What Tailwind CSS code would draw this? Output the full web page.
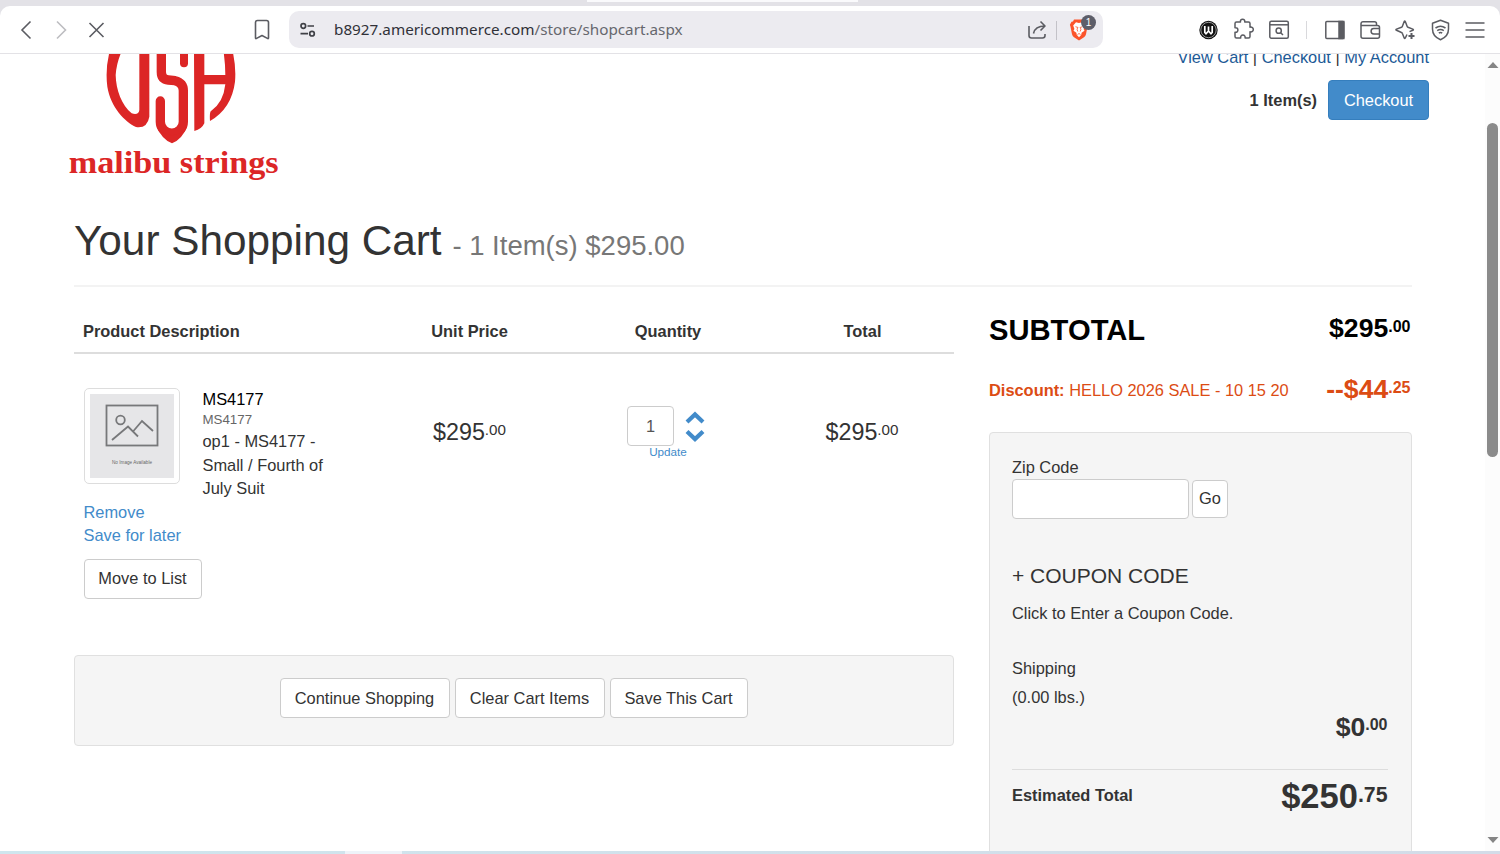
<!DOCTYPE html>
<html lang="en">
<head>
    <meta charset="UTF-8">
    <meta name="viewport" content="width=device-width, initial-scale=1.0">
    <title>Your Shopping Cart</title>
    <script src="https://cdn.jsdelivr.net/npm/@tailwindcss/browser@4"></script>
</head>
<body class="w-[1500px] h-[854px] overflow-hidden flex flex-col bg-white font-['Liberation_Sans',Arial,sans-serif] text-[16.4px] leading-[23.5px] text-[#333]">

    <!-- Tab strip -->
    <div class="h-[6px] shrink-0 bg-[#e3e2e7] pl-[587px]">
        <div class="w-[271px] h-[2px] bg-[#fafafc]"></div>
    </div>

    <!-- Browser toolbar -->
    <div class="h-12 shrink-0 bg-[#e3e2e7]">
        <div class="h-12 bg-white rounded-t-[10px] border-b border-[#e3e2e6] flex items-center pl-[14px] pt-px text-[#5b5c62]">
            <svg class="w-6 h-6 shrink-0" viewBox="0 0 24 24" fill="none" stroke="currentColor" stroke-width="1.6"><path d="M16.5 3.5L8 12l8.5 8.5"/></svg>
            <svg class="w-6 h-6 shrink-0 ml-[11px] text-[#bdbdc1]" viewBox="0 0 24 24" fill="none" stroke="currentColor" stroke-width="1.6"><path d="M8 3.5l8.5 8.5-8.5 8.5"/></svg>
            <svg class="w-6 h-6 shrink-0 ml-[11px]" viewBox="0 0 24 24" fill="none" stroke="currentColor" stroke-width="1.6"><path d="M5.5 5l14 14M19.5 5l-14 14"/></svg>
            <svg class="w-6 h-6 shrink-0 ml-[142px]" viewBox="0 0 24 24" fill="none" stroke="currentColor" stroke-width="1.6" stroke-linejoin="round"><path d="M5.500 4.500a2 2 0 0 1 2-2h9a2 2 0 0 1 2 2v15.300q0 1.300-1.100.6L12 17.500l-5.400 2.900q-1.100.7-1.100-.6z"/></svg>

            <div class="ml-[15px] mb-px w-[814px] h-[37px] shrink-0 rounded-[10px] bg-[#ecebf0] flex items-center pl-[7px] pt-px">
                <svg class="w-6 h-6 shrink-0" viewBox="0 0 24 24" fill="none" stroke="#3f4046" stroke-width="1.7"><circle cx="7.300" cy="8" r="2.300"/><path d="M11.500 8H18M4.500 15.700h7.500"/><circle cx="16" cy="15.700" r="2.300"/></svg>
                <span class="ml-[14px] w-[680px] font-['Noto_Sans','Open_Sans',sans-serif] text-[15.25px] text-[#66676d] whitespace-nowrap"><span class="text-[#303138]">b8927.americommerce.com</span>/store/shopcart.aspx</span>
                <svg class="w-6 h-6 shrink-0 ml-[11px]" viewBox="0 0 24 24" fill="none" stroke="currentColor" stroke-width="1.6" stroke-linejoin="round"><path d="M4 8v9.500a2.500 2.500 0 0 0 2.500 2.500h11a2.500 2.500 0 0 0 2.500-2.500V16M8.500 15.500C9.500 10.500 13 8 20 8M15.500 3.500L20 8l-4.500 4.500"/></svg>
                <div class="ml-[7px] w-px h-[19px] bg-[#c3c2c8]"></div>
                <div class="relative ml-[10px] w-6 h-6">
                    <svg class="w-6 h-6" viewBox="0 0 24 24"><path d="M7 1.500h9l2 2 1.700.2 1.300 3-.6 2-1.400 7.500q-.5 2-2 3L12 22.500l-5-3.300q-1.500-1-2-3L3.500 8.700l-.6-2 1.600-3 1.500-.2z" fill="#fb542b"/><path d="M12 5l3-.8 2.800 3.300-1.200 3.500.9 1.800-2.900 2-.3 2L12 19.200l-2.300-2.400-.3-2-2.900-2 .9-1.800-1.200-3.500L9 4.200z" fill="#fff"/><path d="M8.500 8.700l2.500.8-1 1.600.8 2.400M15.500 8.700l-2.500.8 1 1.600-.8 2.400M10.500 16.500l1.500-1 1.500 1" stroke="#fb542b" fill="none" stroke-width=".8"/></svg>
                    <span class="absolute left-[14px] -top-[3px] w-[15px] h-[15px] rounded-full bg-[#5d5e69] text-white text-[10px] leading-[15px] text-center">1</span>
                </div>
            </div>

            <svg class="w-6 h-6 shrink-0 ml-[93px]" viewBox="0 0 24 24"><circle cx="12.500" cy="12" r="9.200" fill="#111"/><circle cx="12.500" cy="12" r="7.700" fill="none" stroke="#b9b9b9" stroke-width=".8"/><path d="M8.800 8v6.500l1.200 1.300 2.500-2.800 2.500 2.800 1.200-1.300V8M12.500 8.500V13" fill="none" stroke="#fff" stroke-width="1.7"/></svg>
            <svg class="w-6 h-6 shrink-0 ml-[11px]" viewBox="0 0 24 24" fill="none" stroke="currentColor" stroke-width="1.5" stroke-linejoin="round"><path d="M5.500 4h4c-.4-1.800.5-2.800 2.100-2.800s2.500 1 2.100 2.800h3.800q1.500 0 1.500 1.500v3.700c2-.5 3.300.7 3.300 2.300s-1.300 2.800-3.300 2.300v4.700q0 1.500-1.500 1.500h-3.400c.3-1.800-.6-2.900-2.200-2.900S9.400 18.200 9.700 20H5.500Q4 20 4 18.500v-4.200c1.800.3 2.900-.8 2.900-2.300S5.800 9.400 4 9.700V5.500Q4 4 5.500 4z"/></svg>
            <svg class="w-6 h-6 shrink-0 ml-[12px]" viewBox="0 0 24 24" fill="none" stroke="currentColor" stroke-width="1.5"><rect x="2.800" y="3.200" width="18.500" height="17" rx="1.500"/><path d="M3 6.800h18.500"/><circle cx="11.700" cy="12.700" r="2.600"/><path d="M13.700 14.700l2.300 2.300"/></svg>
            <div class="ml-[15px] w-px h-[18px] bg-[#d9d9dc]"></div>
            <svg class="w-6 h-6 shrink-0 ml-[16px]" viewBox="0 0 24 24" fill="none" stroke="currentColor" stroke-width="1.5"><rect x="2.800" y="3.500" width="18" height="17" rx="1"/><path d="M16 3.500h4.800v17H16z" fill="currentColor"/></svg>
            <svg class="w-6 h-6 shrink-0 ml-[11px]" viewBox="0 0 24 24" fill="none" stroke="currentColor" stroke-width="1.5" stroke-linejoin="round"><path d="M18.500 7.500V5.700a2 2 0 0 0-2-2H5a2 2 0 0 0-2 2v12.600a2 2 0 0 0 2 2h14.500a2 2 0 0 0 2-2V9.500a2 2 0 0 0-2-2H3.500M21.500 10.500h-5.700a2.700 2.700 0 0 0 0 5.400h5.700"/></svg>
            <svg class="w-6 h-6 shrink-0 ml-[11px]" viewBox="0 0 24 24" fill="none" stroke="currentColor" stroke-width="1.5" stroke-linejoin="round"><path d="M14 16.500L12.300 20q-.6 1.100-1.100 0l-1.900-4.700q-.2-.6-.8-.8L3.500 12.300q-1.200-.6 0-1.200L8.500 9.300q.6-.2.800-.8l1.900-4.900q.5-1.100 1.100 0l1.900 4.900q.2.600.8.800l4.800 1.800q1.200.6 0 1.200l-3.300 1.300"/><path d="M18.500 15v6M15.500 18h6" stroke-width="2"/></svg>
            <svg class="w-6 h-6 shrink-0 ml-[11px]" viewBox="0 0 24 24" fill="none" stroke="currentColor" stroke-width="1.5" stroke-linejoin="round"><path d="M12.500 2.300l8 3v5.700c0 5.500-3 8.700-8 10.700-5-2-8-5.200-8-10.700V5.300z"/><path d="M7.500 10q5-3.300 10 0M9.200 12.600q3.300-2.200 6.600 0M10.800 15q1.700-1 3.400 0"/></svg>
            <svg class="w-6 h-6 shrink-0 ml-[11px]" viewBox="0 0 24 24" fill="none" stroke="currentColor" stroke-width="1.7"><path d="M2.500 5h19M2.500 12h19M2.500 19h19"/></svg>
        </div>
    </div>

    <!-- Page -->
    <div class="h-[797px] shrink-0 flex overflow-hidden">
        <div class="w-[1485px] h-[797px] overflow-hidden">

            <!-- Store header -->
            <div class="h-[164px] flex justify-between pl-[50px] pr-[56px]">
                <svg class="w-[250px] h-[136px]" viewBox="0 12 750 408" fill="#dc2626">
                    <path d="M180 0Q165 55 172 110C182 172 225 215 258 231Q292 236 298 200V0H268V180Q266 196 245 190C215 165 198 120 197 75Q200 35 217 0z"/>
                    <path d="M334 -5V66Q334 88 355 90L375 92Q400 98 400 122V215a34.500 34.500 0 0 1-69 0V153" fill="none" stroke="#dc2626" stroke-width="28" stroke-linecap="round"/>
                    <path d="M319 228Q335 268 366 280Q397 268 412 228Q395 255 366 256Q336 255 319 228z"/>
                    <path d="M402 0V40" stroke="#dc2626" stroke-width="24" stroke-linecap="round"/>
                    <path d="M432 0H463V75H526Q526 40 520 0H547Q559 50 555 95Q545 175 480 213Q478 184 484 182Q520 158 526 103H463V220Q455 238 433 243z"/>
                    <text x="56" y="369" textLength="630" lengthAdjust="spacingAndGlyphs" font-family="Liberation Serif, serif" font-weight="bold" font-size="96">malibu strings</text>
                </svg>
                <div class="flex flex-col items-end">
                    <div class="-mt-[8px] h-[24px] text-[#1d5a96] whitespace-nowrap">View Cart <span class="text-[#333]">|</span> Checkout <span class="text-[#333]">|</span> My Account</div>
                    <div class="mt-[10px] flex items-center gap-[11px]">
                        <span class="font-bold pt-px">1 Item(s)</span>
                        <button class="w-[101px] h-10 rounded-[4px] border border-[#357ebd] bg-[#428bca] text-white pt-px">Checkout</button>
                    </div>
                </div>
            </div>

            <div class="ml-[74px] w-[1338px]">
                <h1 class="h-[69px] border-b-2 border-[#f3f3f3] text-[42.3px] leading-[46px] whitespace-nowrap">Your Shopping Cart <small class="text-[27.5px] text-[#777] -ml-px">- 1 Item(s) $295.00</small></h1>

                <div class="flex mt-[23px]">
                    <!-- Cart items -->
                    <div class="w-[880px]">
                        <div class="h-[44px] border-b-2 border-[#ddd] grid grid-cols-[297px_197px_200px_186px] items-center font-bold pt-[2px]">
                            <div class="pl-[9px]">Product Description</div>
                            <div class="text-center">Unit Price</div>
                            <div class="text-center">Quantity</div>
                            <div class="text-center pl-[3px]">Total</div>
                        </div>

                        <div class="h-[301px] grid grid-cols-[297px_197px_200px_186px]">
                            <div class="pt-[34px] pl-[9.5px]">
                                <div class="flex h-[112.5px] gap-[23px]">
                                    <div class="w-24 h-24 shrink-0 rounded-[5px] border border-[#ddd] p-[5px]">
                                        <svg class="w-full h-full bg-[#e6e6e8]" viewBox="0 0 84 84" fill="none" stroke="#77787a" stroke-width="1.8">
                                            <rect x="16.500" y="11.500" width="51" height="40"/>
                                            <circle cx="30.500" cy="26" r="4.300"/>
                                            <path d="M22 46l16-13.500 10 10M43 37.500l9-10.500 11 10"/>
                                            <text x="42" y="70" text-anchor="middle" textLength="40" font-size="4.600" font-family="Liberation Sans, sans-serif" fill="#666" stroke="none">No Image Available</text>
                                        </svg>
                                    </div>
                                    <div class="w-[150px]">
                                        <div class="text-black">MS4177</div>
                                        <div class="text-[13.3px] leading-[15px] pb-[3.5px] text-[#666]">MS4177</div>
                                        <div>op1 - MS4177 - Small / Fourth of July Suit</div>
                                    </div>
                                </div>
                                <div class="text-[#428bca]">Remove</div>
                                <div class="text-[#428bca]">Save for later</div>
                                <button class="mt-[11.5px] w-[118px] h-10 rounded-[4px] border border-[#ccc] bg-white">Move to List</button>
                            </div>
                            <div class="pt-[64px] text-center text-[23.3px] leading-[28px]">$295<sup class="text-[15.2px] top-[-0.35em]">.00</sup></div>
                            <div class="pt-[52px]">
                                <div class="flex items-center pl-[59px] gap-[11px]">
                                    <div class="w-[47px] h-10 rounded-[4px] border border-[#ccc] text-center leading-[39px] text-[#555]">1</div>
                                    <svg class="w-[20px] h-[34px]" viewBox="0 0 20 34" fill="none" stroke="#428bca" stroke-width="4.200"><path d="M2 13L10 5.500l8 7.500M2 22.500l8 7.500 8-7.500"/></svg>
                                </div>
                                <div class="text-center text-[11.7px] leading-[12px] text-[#428bca]">Update</div>
                            </div>
                            <div class="pt-[64px] pl-[2px] text-center text-[23.3px] leading-[28px]">$295<sup class="text-[15.2px] top-[-0.35em]">.00</sup></div>
                        </div>

                        <div class="h-[91px] rounded-[4px] border border-[#e0e0e0] bg-[#f5f5f5] flex justify-center gap-[5px] pt-[22px] pr-px">
                            <button class="w-[170px] h-10 rounded-[4px] border border-[#ccc] bg-white pt-px">Continue Shopping</button>
                            <button class="w-[150px] h-10 rounded-[4px] border border-[#ccc] bg-white pt-px">Clear Cart Items</button>
                            <button class="w-[138px] h-10 rounded-[4px] border border-[#ccc] bg-white pt-px">Save This Cart</button>
                        </div>
                    </div>

                    <!-- Order summary -->
                    <div class="ml-[35px] w-[422.5px]">
                        <div class="h-[41px] flex justify-between font-bold text-black">
                            <div class="text-[29.2px] leading-[40px]">SUBTOTAL</div>
                            <div class="text-[26.6px] leading-[37px] pr-px">$295<sup class="text-[16px] top-[-0.34em]">.00</sup></div>
                        </div>
                        <div class="mt-[20px] h-[61px] flex justify-between text-[#dc4c14]">
                            <div class="leading-[39px]"><b>Discount:</b> HELLO 2026 SALE - 10 15 20</div>
                            <div class="font-bold text-[26.6px] leading-[37px] pr-px">--$44<sup class="text-[16px] top-[-0.34em]">.25</sup></div>
                        </div>

                        <div class="h-[460px] rounded-[4px] border border-[#e0e0e0] bg-[#f5f5f5] pl-[22px] pr-[23px] pt-[23px]">
                            <div>Zip Code</div>
                            <div class="-mt-px flex items-center gap-[3px]">
                                <input type="text" class="w-[177px] h-10 rounded-[4px] border border-[#ccc] bg-white">
                                <button class="w-[36px] h-[38px] rounded-[4px] border border-[#ccc] bg-white pt-px">Go</button>
                            </div>
                            <div class="mt-[45px] text-[21px] leading-[24px]">+ COUPON CODE</div>
                            <div class="mt-[14px]">Click to Enter a Coupon Code.</div>
                            <div class="mt-[31.5px]">Shipping</div>
                            <div class="mt-[6px]">(0.00 lbs.)</div>
                            <div class="h-[60px] border-b border-[#ddd] text-right font-bold text-[26.6px] leading-[34px]">$0<sup class="text-[16px] top-[-0.32em]">.00</sup></div>
                            <div class="flex justify-between items-center h-[53px] font-bold">
                                <span>Estimated Total</span>
                                <span class="text-[34.5px] leading-[52px]">$250<sup class="text-[21.3px] top-[-0.26em]">.75</sup></span>
                            </div>
                        </div>
                    </div>
                </div>
            </div>
        </div>

        <!-- Scrollbar -->
        <div class="w-[15px] bg-[#fcfcfc] flex flex-col items-center pt-[8px] pb-[8px]">
            <svg class="w-[12px] h-[6px]" viewBox="0 0 12 6" fill="#858585"><path d="M.5 6L6 0l5.500 6z"/></svg>
            <div class="mt-[55px] w-[11px] h-[334px] rounded-full bg-[#8b8b8b]"></div>
            <svg class="mt-auto w-[12px] h-[6px]" viewBox="0 0 12 6" fill="#858585"><path d="M.5 0L6 6l5.500-6z"/></svg>
        </div>
    </div>

    <!-- Taskbar edge -->
    <div class="h-[3px] shrink-0 bg-linear-to-r from-[#cfe6ee] to-[#d3dce8] pl-[345px]">
        <div class="w-[57px] h-[3px] bg-[#eef3f9]"></div>
    </div>
</body>
</html>
